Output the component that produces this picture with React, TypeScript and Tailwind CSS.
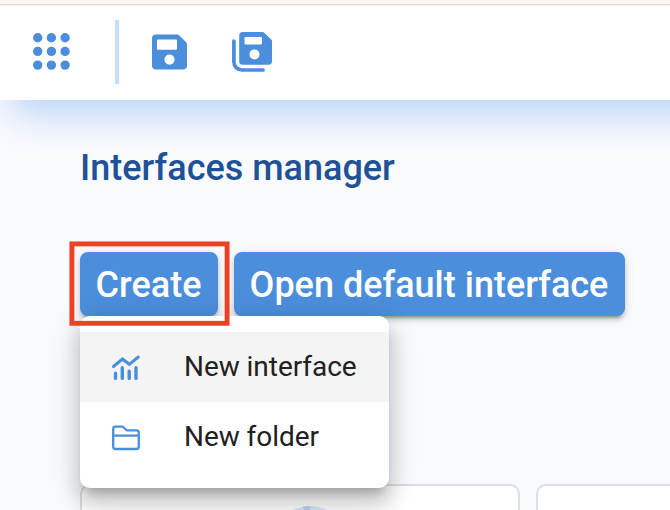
import React from "react";

function AppsIcon() {
  const steps = [4.7, 18.4, 32.1];
  return (
    <svg width="37" height="37" viewBox="0 0 37 37" fill="#4b8edb">
      {steps.map((y) => steps.map((x) => <circle key={`${x}-${y}`} cx={x} cy={y} r="4.7" />))}
    </svg>
  );
}

function SaveIcon() {
  return (
    <svg width="35" height="36" viewBox="0 0 35 36" fill="#4b8edb">
      <path
        fillRule="evenodd"
        d="M4 .4H25.5a2 2 0 0 1 1.4.6L34.4 8.6a2 2 0 0 1 .6 1.4V31.600a4 4 0 0 1-4 4H4a4 4 0 0 1-4-4V4.400a4 4 0 0 1 4-4ZM6 5.500a1 1 0 0 0-1 1V14.800a1 1 0 0 0 1 1H24a1 1 0 0 0 1-1V6.500a1 1 0 0 0-1-1ZM17.500 20.500a5.100 5.100 0 1 0 0 10.200a5.100 5.100 0 1 0 0-10.200Z"
      />
    </svg>
  );
}

function SaveAllIcon() {
  return (
    <svg width="40" height="40" viewBox="0 0 40 40">
      <path
        fill="#4b8edb"
        fillRule="evenodd"
        d="M10.700 0H30.500a2.500 2.500 0 0 1 1.700.7L39.300 7.600a2.500 2.500 0 0 1 .7 1.700V29.200a3.500 3.500 0 0 1-3.500 3.500H10.700a3.500 3.500 0 0 1-3.500-3.500V3.500a3.500 3.500 0 0 1 3.500-3.500ZM13.500 4.900a1 1 0 0 0-1 1V11.500a1 1 0 0 0 1 1H29a1 1 0 0 0 1-1V5.900a1 1 0 0 0-1-1ZM22.500 17.400a5 5 0 1 0 0 10a5 5 0 1 0 0-10Z"
      />
      <path d="M1.900 9V30a8 8 0 0 0 8 8H31" fill="none" stroke="#4b8edb" strokeWidth="3.700" strokeLinecap="round" />
    </svg>
  );
}

function ChartIcon() {
  return (
    <svg width="28" height="26" viewBox="0 0 28 26" fill="none" stroke="#4b8edb" strokeLinecap="round">
      <path d="M1.500 11.500L10.500 4L17.300 9.300L26.300 2" strokeWidth="3" />
      <path d="M3.500 18.200V23.400M10.300 12.700V23.400M17.200 16.200V23.400M24 12.700V23.400" strokeWidth="3.400" />
    </svg>
  );
}

function FolderIcon() {
  return (
    <svg width="28" height="26" viewBox="0 0 28 26" fill="none" stroke="#4b8edb" strokeWidth="2.300" strokeLinejoin="round">
      <path d="M1.200 3.900a2.300 2.300 0 0 1 2.300-2.300H10.200a2 2 0 0 1 1.400.6L14 4.700a2 2 0 0 0 1.400.6H24.500a2.300 2.300 0 0 1 2.300 2.300V21.700a2.300 2.300 0 0 1-2.300 2.300H3.500a2.300 2.300 0 0 1-2.300-2.300ZM1.200 10.700H26.800" />
    </svg>
  );
}

function MenuItem({ icon, label, active = false }: { icon: React.ReactNode; label: string; active?: boolean }) {
  return (
    <button className={`flex h-[70px] w-full items-center pl-8 text-left ${active ? "bg-[#f4f4f4]" : "bg-white"}`}>
      <span className="w-[72px] pt-0.5">{icon}</span>
      <span className="whitespace-nowrap text-[28px] leading-[70px] tracking-[-0.050px] text-[#212121]">{label}</span>
    </button>
  );
}

function CreateMenu() {
  return (
    <div className="absolute left-0 top-16 z-10 h-[172px] w-[309px] rounded-[10px] bg-white py-4 shadow-[0_10px_10px_-6px_rgba(0,0,0,0.2),0_16px_20px_2px_rgba(0,0,0,0.14),0_6px_28px_4px_rgba(0,0,0,0.12)]">
      <MenuItem icon={<ChartIcon />} label="New interface" active />
      <MenuItem icon={<FolderIcon />} label="New folder" />
    </div>
  );
}

const buttonClass =
  "h-16 whitespace-nowrap rounded-lg bg-[#4b8edb] pr-px pt-px text-center text-[36px] font-medium leading-[64px] text-white shadow-[0_6px_2px_-4px_rgba(0,0,0,0.2),0_4px_4px_0_rgba(0,0,0,0.14),0_2px_10px_0_rgba(0,0,0,0.12)]";

export default function App() {
  return (
    <div className="flex h-[510px] w-[670px] flex-col overflow-hidden bg-[#f9fafe] font-['Roboto',sans-serif]">
      <div className="relative z-10 h-[5px] shrink-0 border-b border-[#d9d9d9] bg-[#faf6f3]" />
      <header className="flex h-[95px] w-[740px] shrink-0 items-center border-t border-[#f1f1f1] bg-white pb-[2px] pl-[33px] shadow-[12px_12px_40px_0_#b0d0f4]">
        <div className="-mt-px">
          <AppsIcon />
        </div>
        <div className="ml-[45px] h-16 w-1 bg-[#c5dffb]" />
        <button className="ml-[33px]">
          <SaveIcon />
        </button>
        <button className="ml-[45px]">
          <SaveAllIcon />
        </button>
      </header>
      <main className="flex flex-1 flex-col pl-20">
        <h1 className="mt-[46px] h-11 whitespace-nowrap text-[36px] font-medium leading-[44px] text-[#1e5196]">
          Interfaces manager
        </h1>
        <div className="mt-[62px] flex gap-4">
          <div className="relative">
            <button className={`${buttonClass} w-[138px]`}>Create</button>
            <CreateMenu />
            <svg
              className="pointer-events-none absolute -left-[11px] -top-[11px] z-20"
              width="161"
              height="86"
              viewBox="0 0 161 86"
            >
              <rect x="2.900" y="2.900" width="155.200" height="79.400" fill="none" stroke="#ee4024" strokeWidth="4.900" />
            </svg>
          </div>
          <button className={`${buttonClass} w-[391px]`}>Open default interface</button>
        </div>
        <div className="mt-[168px] flex gap-4">
          <div className="flex h-60 w-[440px] shrink-0 justify-center rounded-[10px] border-2 border-[#dedede] bg-white pt-5">
            <svg className="ml-5 shrink-0" width="80" height="80" viewBox="0 0 80 80">
              <circle cx="40" cy="40" r="40" fill="#d8e7f9" />
              <path d="M40 40L33 .6A40 40 0 0 1 40 0Z" fill="#b5d1f3" />
            </svg>
          </div>
          <div className="h-60 w-[440px] shrink-0 rounded-[10px] border-2 border-[#dedede] bg-white" />
        </div>
      </main>
    </div>
  );
}
